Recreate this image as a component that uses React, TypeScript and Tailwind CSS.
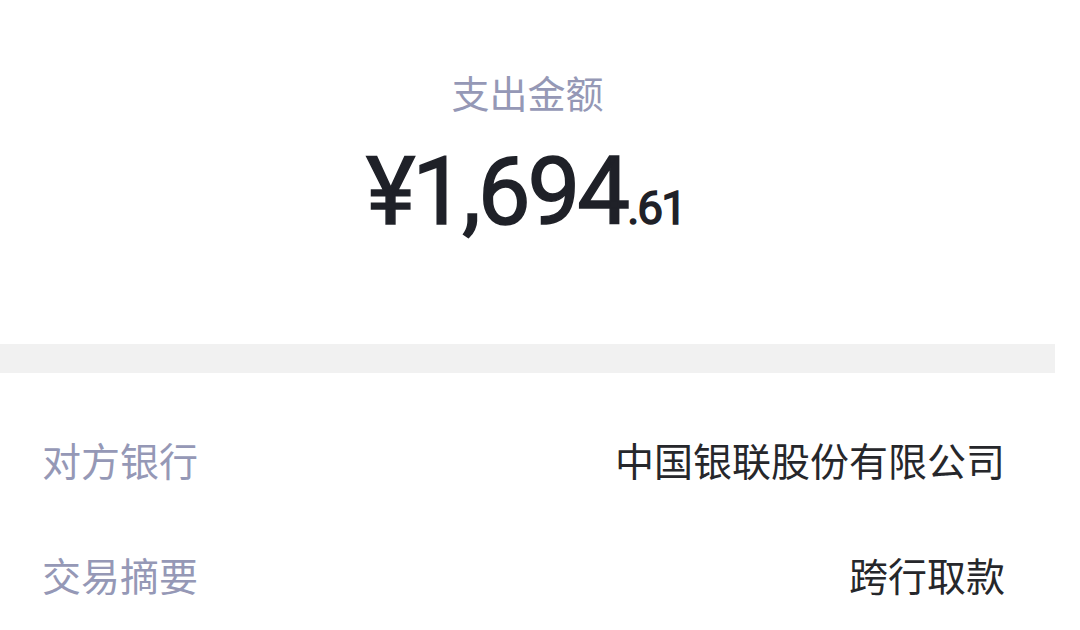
export default function App() {
  return (
    <div className="w-[1080px] h-[630px] bg-white overflow-hidden font-['Noto_Sans_CJK_SC','Noto_Sans',sans-serif]">
      <div className="w-[1055px] flex flex-col">
        <div className="flex flex-col items-center">
          <div className="mt-[72px] text-[38px] leading-[40px] text-[#9598b6]">
            支出金额
          </div>
          <div className="mt-[30px] h-[100px] leading-[100px] text-[#1f2128] font-normal flex items-baseline pr-[4px] font-['Roboto','Liberation_Sans',sans-serif] [-webkit-text-stroke:1.5px_#1f2128]">
            <span className="text-[94px] tracking-[-3px]">¥1,694</span>
            <span className="text-[46px] tracking-[-2px]">.61</span>
          </div>
        </div>
        <div className="mt-[102px] h-[29px] bg-[#f1f1f1]" />
        <div className="pt-[29px]">
          <div className="h-[115px] flex items-center justify-between pl-[42px] pr-[50px] text-[39px]">
            <span className="text-[#9598b6]">对方银行</span>
            <span className="text-[#26272b]">中国银联股份有限公司</span>
          </div>
          <div className="h-[115px] flex items-center justify-between pl-[42px] pr-[50px] text-[39px]">
            <span className="text-[#9598b6]">交易摘要</span>
            <span className="text-[#26272b]">跨行取款</span>
          </div>
        </div>
      </div>
    </div>
  );
}
